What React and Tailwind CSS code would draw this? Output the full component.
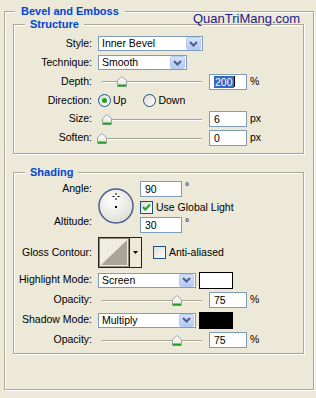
import React from "react";

const Chevron = () => (
  <svg width="9" height="6" viewBox="0 0 9 6">
    <path d="M1 1 L4.5 4.5 L8 1" fill="none" stroke="#4d6185" strokeWidth="2" />
  </svg>
);

const Select = ({ value, className }) => (
  <div className={`flex items-center h-[15px] bg-white border border-[#7f9db9] pl-[3px] pr-[1px] ${className}`}>
    <span className="flex-1 leading-[13px]">{value}</span>
    <div className="w-[15px] h-[13px] rounded-[2px] bg-gradient-to-b from-[#d4e1fc] to-[#b5c9f7] border border-[#b7cbf5] flex items-center justify-center">
      <Chevron />
    </div>
  </div>
);

const Input = ({ children, className = "w-[38px]" }) => (
  <div className={`h-[16px] bg-white border border-[#7f9db9] pl-[4px] flex items-center leading-[12px] ${className}`}>
    {children}
  </div>
);

const Slider = ({ thumb }) => (
  <svg width="106" height="11" viewBox="0 0 106 11" className="block">
    <path d="M6 5.5 H105" stroke="#a7a495" strokeWidth="1" />
    <path d="M5 6.5 H105" stroke="#ffffff" strokeWidth="1" />
    <path d="M6 5.5 Q4.5 5.5 4.5 6.5" fill="none" stroke="#a7a495" />
    <defs>
      <linearGradient id="thumbFill" x1="0" y1="0" x2="0" y2="1">
        <stop offset="0" stopColor="#ffffff" />
        <stop offset="1" stopColor="#e4e3da" />
      </linearGradient>
    </defs>
    <polygon
      points={`${thumb + 0.5},4.5 ${thumb + 5},0.5 ${thumb + 9.5},4.5 ${thumb + 9.5},10.5 ${thumb + 0.5},10.5`}
      fill="url(#thumbFill)"
      stroke="#9ca3a0"
    />
    <rect x={thumb + 1} y="8.5" width="8" height="2" fill="#21a121" />
  </svg>
);

const Radio = ({ checked }) => (
  <svg width="13" height="13" viewBox="0 0 13 13" className="block">
    <defs>
      <linearGradient id="radioFill" x1="0" y1="0" x2="1" y2="1">
        <stop offset="0" stopColor="#dcdcd5" />
        <stop offset="1" stopColor="#ffffff" />
      </linearGradient>
    </defs>
    <circle cx="6.5" cy="6.5" r="6" fill="url(#radioFill)" stroke="#1c5180" />
    {checked && <circle cx="6.5" cy="6.5" r="2.5" fill="#21a121" />}
  </svg>
);

const Checkbox = ({ checked }) => (
  <svg width="13" height="13" viewBox="0 0 13 13" className="block">
    <defs>
      <linearGradient id="checkFill" x1="0" y1="0" x2="1" y2="1">
        <stop offset="0" stopColor="#dcdcd5" />
        <stop offset="1" stopColor="#ffffff" />
      </linearGradient>
    </defs>
    <rect x="0.5" y="0.5" width="12" height="12" fill="url(#checkFill)" stroke="#1c5180" />
    {checked && <path d="M3 6 L5.3 8.5 L10 3.5" fill="none" stroke="#21a121" strokeWidth="2" />}
  </svg>
);

const AngleDial = () => (
  <svg width="36" height="36" viewBox="0 0 36 36" className="block">
    <defs>
      <radialGradient id="dialFill" cx="0.4" cy="0.35" r="0.7">
        <stop offset="0" stopColor="#ffffff" />
        <stop offset="1" stopColor="#dedcd2" />
      </radialGradient>
    </defs>
    <circle cx="18" cy="18" r="17" fill="url(#dialFill)" stroke="#4a5f8f" strokeWidth="1.5" />
    <path d="M18 5 V7 M18 10 V12 M14.5 8.5 H16.5 M19.5 8.5 H21.5" stroke="#000" strokeWidth="1" />
    <rect x="17" y="18" width="2" height="2" fill="#000" />
  </svg>
);

const Contour = () => (
  <svg width="44" height="31" viewBox="0 0 44 31" className="block">
    <rect x="0.5" y="0.5" width="43" height="30" fill="#ece9d8" stroke="#222" />
    <rect x="1.5" y="1.5" width="29" height="28" fill="#efede2" stroke="#8d8a7c" />
    <polygon points="3,28 29,3 29,28" fill="#a9a697" />
    <path d="M31.5 1 V30" stroke="#222" />
    <polygon points="35,14 40,14 37.5,17" fill="#000" />
  </svg>
);

const Swatch = ({ color }) => (
  <div className={`w-[34px] h-[17px] border border-black ml-[3px] ${color}`} />
);

const Row = ({ label, className, children }) => (
  <div className={`flex items-center ${className}`}>
    <div className="w-[78px] text-right">{label}</div>
    <div className="ml-[6px] flex items-center">{children}</div>
  </div>
);

const legendCls = "bg-[#ece9d8] text-[#0046d5] font-bold leading-[12px] text-[11px]";
const boxCls = "border border-[#aca899] shadow-[1px_1px_0_#ffffff,inset_1px_1px_0_#ffffff]";

export default function App() {
  return (
    <div className="relative w-[316px] h-[398px] bg-[#ece9d8] pt-[5px] text-[10.5px] text-black font-['Liberation_Sans',Arial,sans-serif] overflow-hidden">
      <div className="absolute left-[193px] top-[11px] text-[13px] leading-[15px] text-[#1c1c86]">
        QuanTriMang.com
      </div>
      <fieldset className={`ml-[4px] w-[310px] h-[385px] ${boxCls}`}>
        <legend className={`ml-[10px] px-[6px] ${legendCls}`}>Bevel and Emboss</legend>

        <fieldset className={`mt-[1px] ml-[8px] w-[291px] pt-[4px] pb-[5px] ${boxCls}`}>
          <legend className={`ml-[11px] px-[5px] ${legendCls}`}>Structure</legend>
          <Row label="Style:" className="h-[19px]">
            <Select value="Inner Bevel" className="w-[105px]" />
          </Row>
          <Row label="Technique:" className="h-[19px]">
            <Select value="Smooth" className="w-[89px]" />
          </Row>
          <Row label="Depth:" className="h-[19px]">
            <div className="-ml-[1px] flex items-center">
              <Slider thumb={20} />
              <div className="ml-[6px]">
                <Input>
                  <span className="bg-[#316ac5] text-white px-[1px]">200</span>
                  <span className="w-[1px] h-[11px] bg-black" />
                </Input>
              </div>
              <span className="ml-[3px]">%</span>
            </div>
          </Row>
          <Row label="Direction:" className="h-[19px]">
            <Radio checked />
            <span className="ml-[2px]">Up</span>
            <div className="ml-[17px]">
              <Radio />
            </div>
            <span className="ml-[2px]">Down</span>
          </Row>
          <Row label="Size:" className="h-[18px]">
            <div className="-ml-[1px] flex items-center">
              <Slider thumb={5} />
              <div className="ml-[6px]">
                <Input>6</Input>
              </div>
              <span className="ml-[3px]">px</span>
            </div>
          </Row>
          <Row label="Soften:" className="h-[20px]">
            <div className="-ml-[1px] flex items-center">
              <Slider thumb={0} />
              <div className="ml-[6px]">
                <Input>0</Input>
              </div>
              <span className="ml-[3px]">px</span>
            </div>
          </Row>
        </fieldset>

        <fieldset className={`mt-[12px] ml-[8px] w-[291px] pt-[3px] pb-[3px] ${boxCls}`}>
          <legend className={`ml-[11px] px-[5px] ${legendCls}`}>Shading</legend>
          <div className="flex h-[50px]">
            <div className="w-[78px] text-right flex flex-col justify-between py-[1px]">
              <div className="leading-[13px]">Angle:</div>
              <div className="leading-[13px] mb-[2px]">Altitude:</div>
            </div>
            <div className="ml-[6px] mt-[7px]">
              <AngleDial />
            </div>
            <div className="ml-[6px] flex flex-col">
              <div className="flex items-start">
                <Input className="w-[42px] h-[15px]">90</Input>
                <span className="ml-[3px] -mt-[2px]">°</span>
              </div>
              <div className="flex items-center mt-[3px] h-[15px]">
                <Checkbox checked />
                <span className="ml-[3px]">Use Global Light</span>
              </div>
              <div className="flex items-start mt-[2px]">
                <Input className="w-[42px] h-[15px]">30</Input>
                <span className="ml-[3px] -mt-[2px]">°</span>
              </div>
            </div>
          </div>
          <Row label="Gloss Contour:" className="mt-[6px] h-[31px]">
            <Contour />
            <div className="ml-[11px]">
              <Checkbox />
            </div>
            <span className="ml-[3px]">Anti-aliased</span>
          </Row>
          <Row label="Highlight Mode:" className="mt-[2px] h-[20px]">
            <Select value="Screen" className="w-[98px]" />
            <Swatch color="bg-white" />
          </Row>
          <Row label="Opacity:" className="h-[20px]">
            <div className="-ml-[1px] flex items-center">
              <Slider thumb={75} />
              <div className="ml-[6px]">
                <Input>75</Input>
              </div>
              <span className="ml-[3px]">%</span>
            </div>
          </Row>
          <Row label="Shadow Mode:" className="h-[20px]">
            <Select value="Multiply" className="w-[98px]" />
            <Swatch color="bg-black" />
          </Row>
          <Row label="Opacity:" className="h-[20px]">
            <div className="-ml-[1px] flex items-center">
              <Slider thumb={75} />
              <div className="ml-[6px]">
                <Input>75</Input>
              </div>
              <span className="ml-[3px]">%</span>
            </div>
          </Row>
        </fieldset>
      </fieldset>
    </div>
  );
}
